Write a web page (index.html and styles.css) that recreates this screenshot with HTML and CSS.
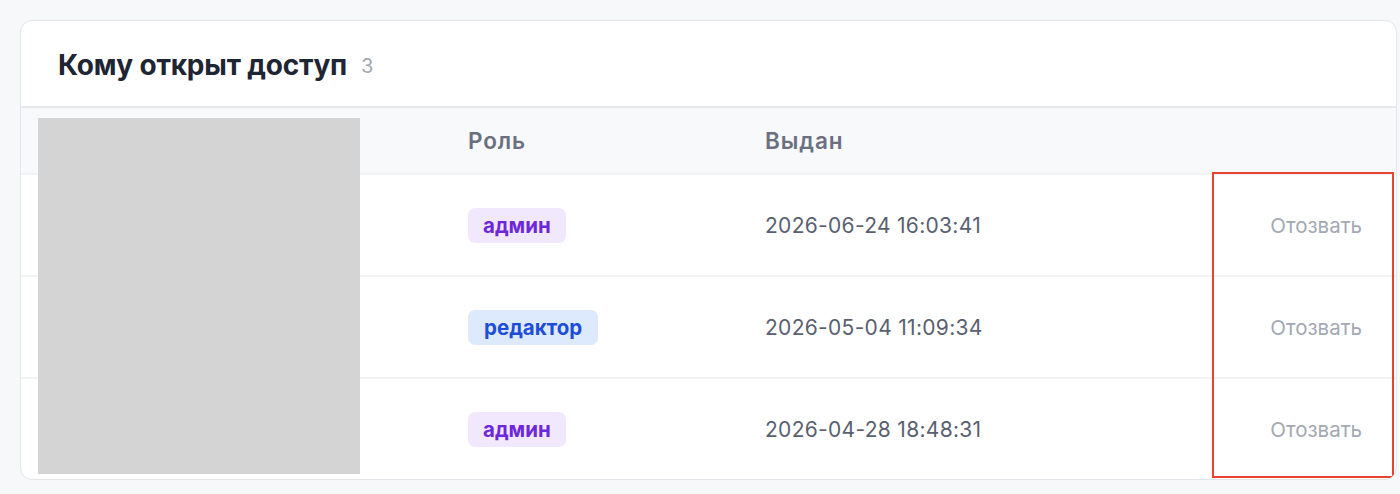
FILE: index.html
```html
<!DOCTYPE html>
<html lang="ru">
<head>
<meta charset="utf-8">
<title>Кому открыт доступ</title>
<link rel="stylesheet" href="styles.css">
</head>
<body>
<section class="card">
  <header class="card-head">
    <h2 class="title">Кому открыт доступ</h2>
    <span class="count">3</span>
  </header>
  <div class="table">
    <div class="row head">
      <div class="cell user"></div>
      <div class="cell">Роль</div>
      <div class="cell">Выдан</div>
      <div class="cell action"></div>
    </div>
    <div class="row">
      <div class="cell user"></div>
      <div class="cell"><span class="badge admin">админ</span></div>
      <div class="cell date">2026-06-24 16:03:41</div>
      <div class="cell action"><button class="revoke">Отозвать</button></div>
    </div>
    <div class="row">
      <div class="cell user"></div>
      <div class="cell"><span class="badge editor">редактор</span></div>
      <div class="cell date">2026-05-04 11:09:34</div>
      <div class="cell action"><button class="revoke">Отозвать</button></div>
    </div>
    <div class="row">
      <div class="cell user"></div>
      <div class="cell"><span class="badge admin">админ</span></div>
      <div class="cell date">2026-04-28 18:48:31</div>
      <div class="cell action"><button class="revoke">Отозвать</button></div>
    </div>
  </div>
  <div class="redact"></div>
  <div class="annot"></div>
</section>
</body>
</html>
```
FILE: styles.css
```css
* { box-sizing: border-box; }
html, body { margin: 0; padding: 0; }
body {
  background: #f7f8fa;
  font-family: "Inter", "Noto Sans", sans-serif;
  padding: 20px 3px 0 20px;
  height: 494px;
  overflow: hidden;
}
.card {
  position: relative;
  background: #fff;
  border: 1px solid #e3e5ea;
  border-radius: 12px;
  overflow: hidden;
  height: 460px;
}
.card-head {
  height: 87px;
  display: flex;
  align-items: center;
  gap: 14px;
  padding-left: 37px;
  padding-top: 2px;
  border-bottom: 2px solid #e6e8ec;
}
.title {
  margin: 0;
  font-size: 28px;
  font-weight: 700;
  color: #1e2533;
  letter-spacing: -0.2px;
}
.count {
  font-size: 20px;
  color: #a3a8b3;
  font-weight: 400;
  margin-top: 2px;
}
.row {
  display: grid;
  grid-template-columns: 447px 297px 1fr 200px;
  height: 102px;
  align-items: center;
  border-top: 2px solid #f1f2f4;
}
.row.head {
  height: 65px;
  border-top: 0;
  background: #f8f9fb;
}
.row.head .cell {
  font-size: 22.5px;
  font-weight: 600;
  color: #6b7080;
  letter-spacing: 0.9px;
}
.cell { font-size: 20px; }
.date {
  color: #5a6070;
  font-size: 21px;
  letter-spacing: 0.3px;
}
.badge {
  display: inline-block;
  height: 35px;
  line-height: 35px;
  padding: 0 15px;
  border-radius: 7px;
  font-size: 20.5px;
  font-weight: 700;
}
.badge.admin { background: #f2e8fd; color: #6d28d9; }
.badge.editor { background: #dde9fc; color: #1d4ed8; padding: 0 16px; }
.action { text-align: right; padding-right: 34px; }
.revoke {
  background: none;
  border: 0;
  padding: 0;
  font-family: inherit;
  font-size: 20.5px;
  color: #a3a8b3;
  cursor: pointer;
}
.redact {
  position: absolute;
  left: 17px;
  top: 97px;
  width: 322px;
  height: 356px;
  background: #d4d4d4;
}
.annot {
  position: absolute;
  left: 1191px;
  top: 151px;
  width: 182px;
  height: 306px;
  border: 2px solid #e8432c;
}
```
